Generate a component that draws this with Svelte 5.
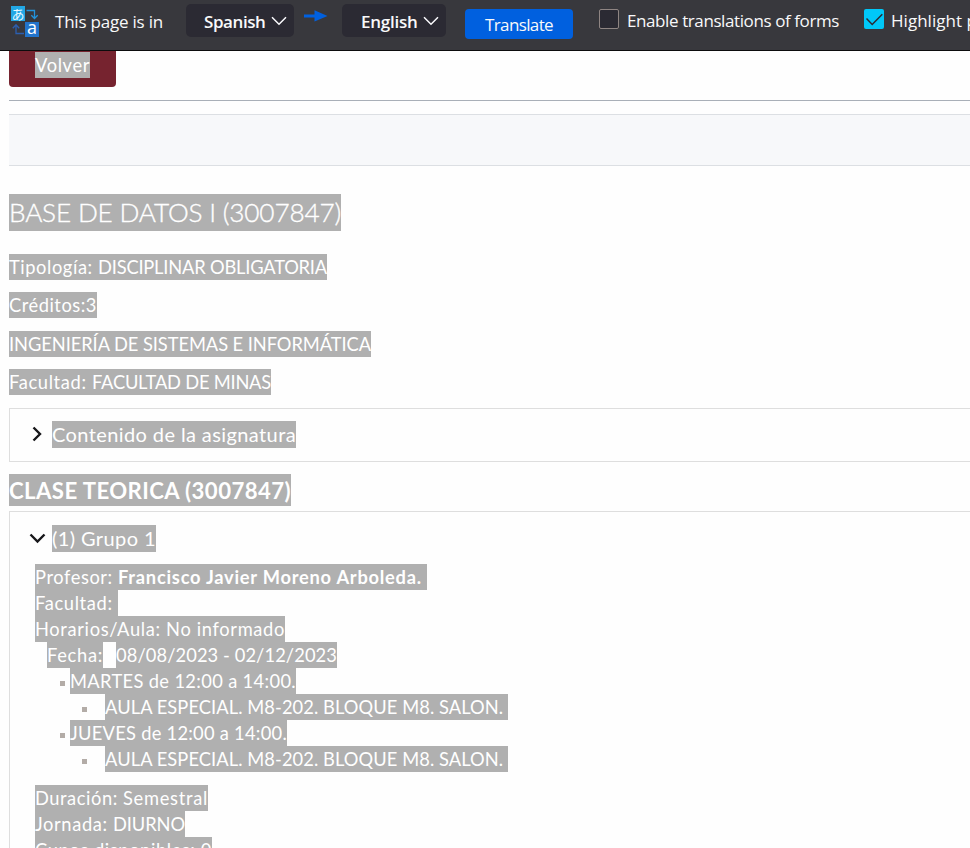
<script>
  const details = [
    [{ text: 'Tipología: ', width: 89 }, { text: 'DISCIPLINAR OBLIGATORIA', width: 229 }],
    [{ text: 'Créditos:3', width: 88 }],
    [{ text: 'INGENIERÍA DE SISTEMAS E INFORMÁTICA', width: 362 }],
    [{ text: 'Facultad: ', width: 83 }, { text: 'FACULTAD DE MINAS', width: 179 }]
  ];

  const sessions = [
    { text: 'MARTES de 12:00 a 14:00.', width: 226, room: 'AULA ESPECIAL. M8-202. BLOQUE M8. SALON. ' },
    { text: 'JUEVES de 12:00 a 14:00.', width: 217, room: 'AULA ESPECIAL. M8-202. BLOQUE M8. SALON. ' }
  ];

  const extras = [
    [{ text: 'Duración: ', width: 88 }, { text: 'Semestral', width: 85 }],
    [{ text: 'Jornada: ', width: 78 }, { text: 'DIURNO', width: 72 }],
    [{ text: 'Cupos disponibles: 0', width: 177 }]
  ];

  // Spreads the tracking of a run of text over a given measure.
  function fit(node, width) {
    const natural = node.getBoundingClientRect().width;
    node.style.letterSpacing = (width - natural) / node.textContent.length + 'px';
  }
</script>

<div class="page">
  <header class="bar">
    <svg class="logo" width="30" height="33" viewBox="0 0 30 33">
      <rect x="1" y="1" width="14" height="15" fill="#22a7e5" />
      <text x="1.500" y="13.500" class="kana">あ</text>
      <path d="M16.500 5.500h8V13M21.300 10.200l3.200 3.300 3.200-3.300" fill="none" stroke="#2293dc" stroke-width="1.300" />
      <path d="M14 28.500H6V20M2.800 23.200L6 19.800l3.200 3.400" fill="none" stroke="#2c5fb0" stroke-width="1.300" />
      <rect x="15" y="17" width="14" height="15" fill="#2274cc" />
      <text x="17" y="29" class="glyph">a</text>
    </svg>
    <div class="label intro"><span use:fit={108}>This page is in</span></div>
    <div class="select from">
      <b use:fit={61.5}>Spanish</b>
      <svg width="16" height="10" viewBox="0 0 16 10"><path d="M1 1.300L8 8.300l7-7" /></svg>
    </div>
    <svg class="arrow" width="24" height="12" viewBox="0 0 24 12"><path d="M0 4.500h10.500V.3L23.500 6 10.500 11.500V7.500H0z" fill="#0060df" /></svg>
    <div class="select to">
      <b use:fit={56.5}>English</b>
      <svg width="16" height="10" viewBox="0 0 16 10"><path d="M1 1.300L8 8.300l7-7" /></svg>
    </div>
    <div class="translate"><span use:fit={68}>Translate</span></div>
    <div class="box"></div>
    <div class="label forms"><span use:fit={212}>Enable translations of forms</span></div>
    <div class="box checked">
      <svg width="20" height="20" viewBox="0 0 20 20"><path d="M2.500 9.500l5.700 6L18.300 5.200" /></svg>
    </div>
    <div class="label mark"><span use:fit={86}>Highlight p</span></div>
  </header>

  <main>
    <div class="back"><span class="hl"><span use:fit={55}>Volver</span></span></div>
    <hr />
    <div class="strip"></div>

    <h1><span class="hl"><span use:fit={332}>BASE DE DATOS I (3007847)</span></span></h1>

    <div class="details">
      {#each details as runs}
        <p><span class="hl">{#each runs as r}<span use:fit={r.width}>{r.text}</span>{/each}</span></p>
      {/each}
    </div>

    <section class="panel closed">
      <svg width="20" height="20" viewBox="0 0 20 20"><path d="M6.500 3.500l6.500 6.500-6.500 6.500" /></svg>
      <span class="hl"><span use:fit={244}>Contenido de la asignatura</span></span>
    </section>

    <h2><span class="hl"><span use:fit={282}>CLASE TEORICA (3007847)</span></span></h2>

    <section class="panel open">
      <div class="title">
        <svg width="20" height="20" viewBox="0 0 20 20"><path d="M3.500 6.500l7 7 7-7" /></svg>
        <span class="hl"><span use:fit={104}>(1) Grupo 1</span></span>
      </div>
      <div class="body">
        <p><span class="hl"><span use:fit={83}>{'Profesor: '}</span><b use:fit={309}>{'Francisco Javier Moreno Arboleda. '}</b></span></p>
        <p><span class="hl"><span use:fit={83}>{'Facultad: '}</span></span></p>
        <p><span class="hl"><span use:fit={250}>Horarios/Aula: No informado</span></span></p>
        <p class="dates">
          <span class="hl"><span use:fit={56}>Fecha:</span></span>
          <span class="hl"><span use:fit={221}>08/08/2023 - 02/12/2023</span></span>
        </p>
        {#each sessions as s}
          <p class="day"><i></i><span class="hl"><span use:fit={s.width}>{s.text}</span></span></p>
          <p class="room"><i></i><span class="hl"><span use:fit={403}>{s.room}</span></span></p>
        {/each}
        <div class="extras">
          {#each extras as runs}
            <p><span class="hl">{#each runs as r}<span use:fit={r.width}>{r.text}</span>{/each}</span></p>
          {/each}
        </div>
      </div>
    </section>
  </main>
</div>

<style>
  :global(body) { background: #fefefe; overflow: hidden; }
  .page {
    width: 970px;
    height: 848px;
    overflow: hidden;
    font-family: Lato, Carlito, sans-serif;
    font-size: 18.3px;
    color: #fff;
  }
  p, h1, h2 { margin: 0; display: flex; }

  .bar {
    box-sizing: border-box;
    display: flex;
    align-items: flex-start;
    height: 51px;
    background: #38383d;
    border-bottom: 1px solid #0c0c0d;
    font-family: "Open Sans", "Noto Sans", sans-serif;
    font-size: 17px;
    line-height: 24px;
    color: #f9f9fa;
    overflow: hidden;
    white-space: nowrap;
  }
  .bar > * { flex: none; }
  .logo { margin: 5px 0 0 10px; }
  .glyph { font: 400 18px "Open Sans", sans-serif; fill: #fff; }
  .kana { font: 400 13px "Noto Sans CJK JP", sans-serif; fill: #e9f8ff; }
  .label { padding-top: 9px; }
  .intro { width: 131px; margin-left: 15px; padding-top: 10px; }
  .select {
    box-sizing: border-box;
    display: flex;
    align-items: flex-start;
    justify-content: space-between;
    height: 33px;
    margin-top: 4px;
    padding: 6px 7px 0 18px;
    border-radius: 5px;
    background: #2b2a33;
  }
  .select b { font-weight: 600; }
  .select svg { flex: none; margin-top: 6px; }
  .from { width: 108px; }
  .to { width: 104px; padding-left: 19px; margin-left: 14px; }
  .select path, .checked path { fill: none; stroke: #fbfbfe; stroke-width: 1.5; }
  .arrow { margin: 10px 0 0 10px; }
  .translate {
    box-sizing: border-box;
    width: 108px;
    height: 30px;
    margin: 9px 0 0 19px;
    padding: 4px 0 0 20px;
    border-radius: 4px;
    background: #0060df;
  }
  .box {
    box-sizing: border-box;
    width: 20px;
    height: 20px;
    margin: 9px 0 0 26px;
    border: 1px solid #8f8583;
    border-radius: 2px;
    background: #2b2a33;
  }
  .forms { width: 213px; margin-left: 8px; }
  .checked { margin-left: 24px; border: 0; background: #00c8f8; }
  .checked svg { display: block; }
  .checked path { stroke: #2b2a33; }
  .mark { margin-left: 7px; }

  main { padding-left: 9px; }
  .hl {
    display: block;
    height: 26px;
    line-height: 27px;
    background: #b0b0b0;
    white-space: pre;
  }
  .back {
    box-sizing: border-box;
    display: flex;
    width: 107px;
    height: 36px;
    padding: 1px 0 0 26px;
    border-radius: 0 0 4px 4px;
    background: #76232f;
  }
  hr { height: 1px; margin: 13px 0; border: 0; background: #a9afb8; }
  .strip {
    box-sizing: border-box;
    height: 52px;
    border: solid #dcdfe3;
    border-width: 1px 0;
    background: #f7f8fa;
  }
  h1 { margin-top: 28px; font-size: 26.2px; font-weight: 300; -webkit-text-stroke: 0.35px #fff; }
  h1 .hl { height: 37px; line-height: 37px; }
  .details { padding-top: 23px; }
  .details p { margin-bottom: 12px; }
  .details p:nth-child(2) { margin-bottom: 13px; }
  .panel { border: 1px solid #dedede; border-right: 0; font-size: 20px; }
  .panel svg { width: 20px; height: 20px; margin: 3px 5px 0 17px; }
  .panel path { fill: none; stroke: #17171a; stroke-width: 2.4; }
  .closed {
    box-sizing: border-box;
    display: flex;
    height: 54px;
    margin-top: 13px;
    padding-top: 12px;
  }
  .closed .hl, .title .hl { height: 27px; line-height: 26px; }
  h2 { margin: 12px 0 5px; font-size: 22.2px; font-weight: 700; }
  h2 .hl { height: 32px; line-height: 34px; }
  .title { display: flex; padding: 13px 0 12px; }
  .body { padding-left: 25px; font-size: 18.3px; }
  .dates { gap: 13px; padding-left: 12px; }
  i { width: 5px; height: 5px; margin-top: 13px; background: #b3aca7; }
  .day { gap: 5px; padding-left: 25px; }
  .room { gap: 18px; padding-left: 47px; }
  .extras { padding-top: 13px; }
</style>
